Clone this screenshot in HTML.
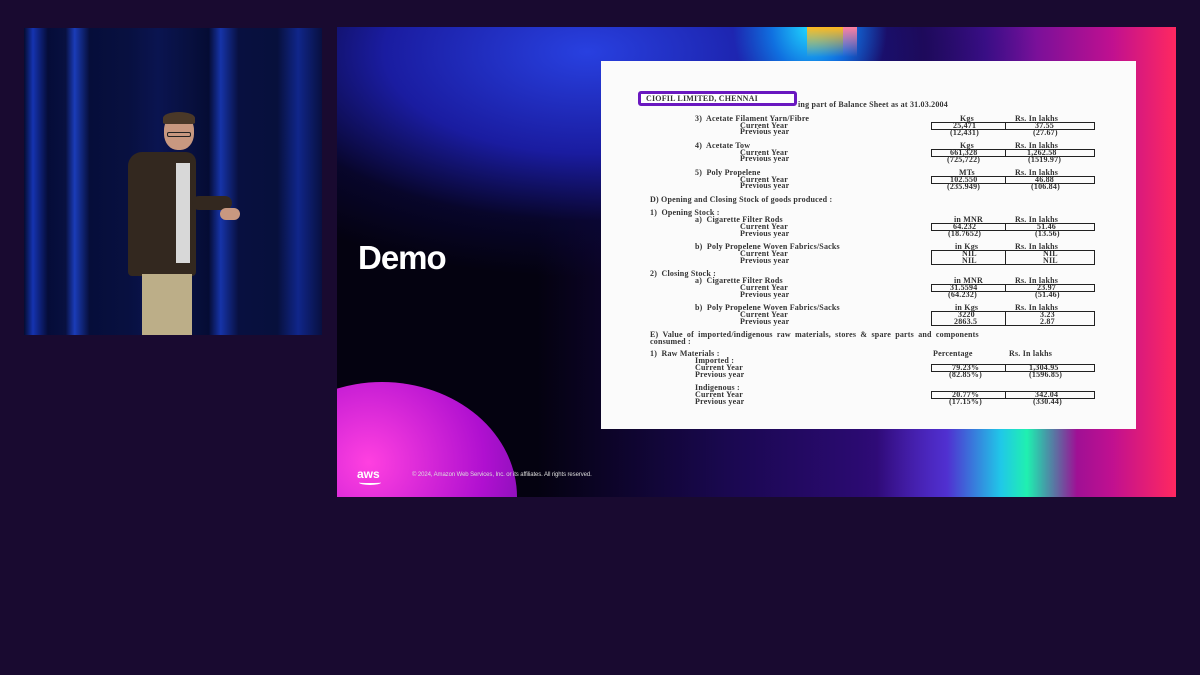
<!DOCTYPE html>
<html><head><meta charset="utf-8"><style>
*{margin:0;padding:0;box-sizing:border-box}
body{width:1200px;height:675px;background:#190a30;position:relative;overflow:hidden;font-family:"Liberation Sans",sans-serif}
.a{position:absolute}
#vid{left:24px;top:28px;width:298px;height:307px;overflow:hidden;
background:linear-gradient(90deg,#040c30 0%,#1533b0 3%,#050c38 8%,#081040 14%,#1a3cb8 17%,#060e3a 22%,#081040 35%,#0a1450 45%,#081040 55%,#050c34 62%,#1634a8 66%,#081040 72%,#07103c 85%,#10268a 92%,#081040 100%)}
#slide{left:337px;top:27px;width:839px;height:470px;overflow:hidden;background:#040210}
.doc{left:601px;top:61px;width:535px;height:368px;background:#fbfbfb}
.t{position:absolute;font-family:"Liberation Serif",serif;font-weight:bold;font-size:8px;color:#333;white-space:nowrap;line-height:8px;letter-spacing:0.2px}
.bx{position:absolute;border:1px solid #222;height:8px}
</style></head><body>
<div class="a" id="vid">
 <div class="a" style="left:140px;top:86px;width:30px;height:36px;border-radius:45%;background:#c89880"></div>
 <div class="a" style="left:139px;top:84px;width:32px;height:12px;border-radius:50% 50% 10% 10%;background:#4a3828"></div>
 <div class="a" style="left:143px;top:104px;width:24px;height:5px;border:1px solid #222;border-radius:2px"></div>
 <div class="a" style="left:104px;top:124px;width:68px;height:124px;border-radius:14px 10px 4px 4px;background:#33281f"></div>
 <div class="a" style="left:152px;top:135px;width:14px;height:100px;background:#d8d8d8"></div>
 <div class="a" style="left:168px;top:168px;width:40px;height:14px;border-radius:7px;background:#33281f"></div>
 <div class="a" style="left:196px;top:180px;width:20px;height:12px;border-radius:6px;background:#c89880"></div>
 <div class="a" style="left:118px;top:246px;width:50px;height:61px;background:#bcae88"></div>
</div>
<div class="a" id="slide">
 <div class="a" style="left:200px;top:0;width:639px;height:470px;background:linear-gradient(90deg,rgba(20,5,60,0) 0%,#1a0850 30%,#2a0a70 50%,#4a10a0 70%,#c01090 90%,#ff2860 100%)"></div>
 <div class="a" style="left:-200px;top:-200px;width:900px;height:450px;background:radial-gradient(closest-side,#2840e0 0%,#1a1ca0 45%,rgba(10,8,60,0.6) 75%,transparent 100%)"></div>
 <div class="a" style="left:330px;top:-90px;width:220px;height:180px;background:radial-gradient(closest-side at 65% 50%,#20d8ff 0%,#1070e0 50%,transparent 100%)"></div>
 <div class="a" style="left:470px;top:0;width:36px;height:30px;background:linear-gradient(#ffb820,rgba(255,180,30,0))"></div>
 <div class="a" style="left:506px;top:0;width:14px;height:30px;background:linear-gradient(#ff80a0,rgba(255,120,160,0))"></div>
 <div class="a" style="left:-90px;top:355px;width:270px;height:230px;border-radius:50%;background:radial-gradient(circle at 45% 35%,#ff40e0,#b010d0 55%,#6010a0)"></div>
 <div class="a" style="left:540px;top:400px;width:200px;height:70px;background:linear-gradient(90deg,rgba(60,20,160,0),#5030d0 35%,#20c8e8 62%,#20f0b0 75%,rgba(60,15,130,0) 100%)"></div>
 <div class="a" style="left:21px;top:212px;color:#fff;font-size:33px;font-weight:bold;letter-spacing:-1px">Demo</div>
 <div class="a" style="left:20px;top:440px;color:#fff;font-size:12px;font-weight:bold">aws</div>
 <div class="a" style="left:22px;top:453px;width:22px;height:5px;border-bottom:2px solid #fff;border-radius:0 0 50% 50%"></div>
 <div class="a" style="left:75px;top:445px;color:#ddd;font-size:6px;letter-spacing:-0.1px">© 2024, Amazon Web Services, Inc. or its affiliates. All rights reserved.</div>
</div>
<div class="a doc">
 <div class="a" style="left:37px;top:30px;width:159px;height:15px;border:3px solid #6a18c0;border-radius:3px;background:#fff"></div>
</div>
<div class="t" style="left:646px;top:95px">CIOFIL LIMITED, CHENNAI</div>
<div class="t" style="left:798px;top:101px">ing part of Balance Sheet as at 31.03.2004</div>

<div class="t" style="left:695px;top:115px">3)&nbsp; Acetate Filament Yarn/Fibre</div>
<div class="t" style="left:740px;top:122px">Current Year</div><div class="t" style="left:740px;top:128px">Previous year</div>
<div class="t" style="left:960px;top:115px">Kgs</div><div class="t" style="left:1015px;top:115px">Rs. In lakhs</div>
<div class="bx" style="left:931px;top:122px;width:75px"></div><div class="bx" style="left:1005px;top:122px;width:90px"></div>
<div class="t" style="left:953px;top:122px">25,471</div><div class="t" style="left:1035px;top:122px">37.55</div>
<div class="t" style="left:950px;top:129px">(12,431)</div><div class="t" style="left:1033px;top:129px">(27.67)</div>

<div class="t" style="left:695px;top:142px">4)&nbsp; Acetate Tow</div>
<div class="t" style="left:740px;top:149px">Current Year</div><div class="t" style="left:740px;top:155px">Previous year</div>
<div class="t" style="left:960px;top:142px">Kgs</div><div class="t" style="left:1015px;top:142px">Rs. In lakhs</div>
<div class="bx" style="left:931px;top:149px;width:75px"></div><div class="bx" style="left:1005px;top:149px;width:90px"></div>
<div class="t" style="left:950px;top:149px">661,328</div><div class="t" style="left:1027px;top:149px">1,262.58</div>
<div class="t" style="left:947px;top:156px">(725,722)</div><div class="t" style="left:1028px;top:156px">(1519.97)</div>

<div class="t" style="left:695px;top:169px">5)&nbsp; Poly Propelene</div>
<div class="t" style="left:740px;top:176px">Current Year</div><div class="t" style="left:740px;top:182px">Previous year</div>
<div class="t" style="left:959px;top:169px">MTs</div><div class="t" style="left:1015px;top:169px">Rs. In lakhs</div>
<div class="bx" style="left:931px;top:176px;width:75px"></div><div class="bx" style="left:1005px;top:176px;width:90px"></div>
<div class="t" style="left:950px;top:176px">102.550</div><div class="t" style="left:1035px;top:176px">46.88</div>
<div class="t" style="left:947px;top:183px">(235.949)</div><div class="t" style="left:1031px;top:183px">(106.84)</div>

<div class="t" style="left:650px;top:196px">D) Opening and Closing Stock of goods produced :</div>
<div class="t" style="left:650px;top:209px">1)&nbsp; Opening Stock :</div>
<div class="t" style="left:695px;top:216px">a)&nbsp; Cigarette Filter Rods</div>
<div class="t" style="left:740px;top:223px">Current Year</div><div class="t" style="left:740px;top:230px">Previous year</div>
<div class="t" style="left:954px;top:216px">in MNR</div><div class="t" style="left:1015px;top:216px">Rs. In lakhs</div>
<div class="bx" style="left:931px;top:223px;width:75px"></div><div class="bx" style="left:1005px;top:223px;width:90px"></div>
<div class="t" style="left:953px;top:223px">64.232</div><div class="t" style="left:1037px;top:223px">51.46</div>
<div class="t" style="left:948px;top:230px">(18.7652)</div><div class="t" style="left:1035px;top:230px">(13.56)</div>

<div class="t" style="left:695px;top:243px">b)&nbsp; Poly Propelene Woven Fabrics/Sacks</div>
<div class="t" style="left:740px;top:250px">Current Year</div><div class="t" style="left:740px;top:257px">Previous year</div>
<div class="t" style="left:955px;top:243px">in Kgs</div><div class="t" style="left:1015px;top:243px">Rs. In lakhs</div>
<div class="bx" style="left:931px;top:250px;width:75px;height:15px"></div><div class="bx" style="left:1005px;top:250px;width:90px;height:15px"></div>
<div class="t" style="left:962px;top:250px">NIL</div><div class="t" style="left:1043px;top:250px">NIL</div>
<div class="t" style="left:962px;top:257px">NIL</div><div class="t" style="left:1043px;top:257px">NIL</div>

<div class="t" style="left:650px;top:270px">2)&nbsp; Closing Stock :</div>
<div class="t" style="left:695px;top:277px">a)&nbsp; Cigarette Filter Rods</div>
<div class="t" style="left:740px;top:284px">Current Year</div><div class="t" style="left:740px;top:291px">Previous year</div>
<div class="t" style="left:954px;top:277px">in MNR</div><div class="t" style="left:1015px;top:277px">Rs. In lakhs</div>
<div class="bx" style="left:931px;top:284px;width:75px"></div><div class="bx" style="left:1005px;top:284px;width:90px"></div>
<div class="t" style="left:950px;top:284px">31.5594</div><div class="t" style="left:1037px;top:284px">23.97</div>
<div class="t" style="left:948px;top:291px">(64.232)</div><div class="t" style="left:1035px;top:291px">(51.46)</div>

<div class="t" style="left:695px;top:304px">b)&nbsp; Poly Propelene Woven Fabrics/Sacks</div>
<div class="t" style="left:740px;top:311px">Current Year</div><div class="t" style="left:740px;top:318px">Previous year</div>
<div class="t" style="left:955px;top:304px">in Kgs</div><div class="t" style="left:1015px;top:304px">Rs. In lakhs</div>
<div class="bx" style="left:931px;top:311px;width:75px;height:15px"></div><div class="bx" style="left:1005px;top:311px;width:90px;height:15px"></div>
<div class="t" style="left:958px;top:311px">3220</div><div class="t" style="left:1040px;top:311px">3.23</div>
<div class="t" style="left:954px;top:318px">2863.5</div><div class="t" style="left:1040px;top:318px">2.87</div>

<div class="t" style="left:650px;top:331px;word-spacing:2px">E) Value of imported/indigenous raw materials, stores &amp; spare parts and components</div>
<div class="t" style="left:650px;top:338px">consumed :</div>
<div class="t" style="left:650px;top:350px">1)&nbsp; Raw Materials :</div>
<div class="t" style="left:933px;top:350px">Percentage</div><div class="t" style="left:1009px;top:350px">Rs. In lakhs</div>
<div class="t" style="left:695px;top:357px">Imported :</div>
<div class="t" style="left:695px;top:364px">Current Year</div><div class="t" style="left:695px;top:371px">Previous year</div>
<div class="bx" style="left:931px;top:364px;width:75px"></div><div class="bx" style="left:1005px;top:364px;width:90px"></div>
<div class="t" style="left:952px;top:364px">79.23%</div><div class="t" style="left:1029px;top:364px">1,304.95</div>
<div class="t" style="left:949px;top:371px">(82.85%)</div><div class="t" style="left:1029px;top:371px">(1596.85)</div>
<div class="t" style="left:695px;top:384px">Indigenous :</div>
<div class="t" style="left:695px;top:391px">Current Year</div><div class="t" style="left:695px;top:398px">Previous year</div>
<div class="bx" style="left:931px;top:391px;width:75px"></div><div class="bx" style="left:1005px;top:391px;width:90px"></div>
<div class="t" style="left:952px;top:391px">20.77%</div><div class="t" style="left:1035px;top:391px">342.04</div>
<div class="t" style="left:949px;top:398px">(17.15%)</div><div class="t" style="left:1033px;top:398px">(330.44)</div>
</body></html>
